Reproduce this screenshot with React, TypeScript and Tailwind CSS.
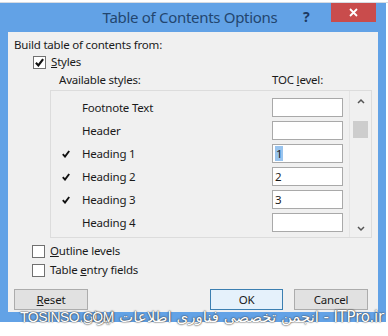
import React from 'react'

const rows = [
  { name: 'Footnote Text', level: '', checked: false },
  { name: 'Header', level: '', checked: false },
  { name: 'Heading 1', level: '1', checked: true },
  { name: 'Heading 2', level: '2', checked: true },
  { name: 'Heading 3', level: '3', checked: true },
  { name: 'Heading 4', level: '', checked: false },
]

function Tick({ size = 8 }: { size?: number }) {
  return (
    <svg width={size} height={size} viewBox="0 0 8 8">
      <path d="M0.8 4.2 L3 6.6 L7.2 1" fill="none" stroke="#111" strokeWidth="1.9" />
    </svg>
  )
}

function CheckBox({ checked }: { checked: boolean }) {
  return (
    <span className="w-[13px] h-[13px] border border-[#707070] bg-white flex items-center justify-center">
      {checked && <Tick size={9} />}
    </span>
  )
}

export default function App() {
  return (
    <div
      className="relative w-[388px] h-[336px] bg-white overflow-hidden text-[11.5px] tracking-[-0.2px] text-[#1a1a1a]"
      style={{ fontFamily: '"Noto Sans", "Open Sans", sans-serif' }}
    >
      {/* top strip */}
      <div className="h-[3px] border-b border-[#d6dbe2] bg-white"></div>

      {/* dialog frame */}
      <div className="w-[386px] bg-[#62a2e6]">
        {/* title bar */}
        <div className="relative h-[29px] flex items-center justify-center">
          <span className="text-[15px] tracking-[-0.3px] text-[#23466f] leading-none mt-[-1px] ml-[-6px]">
            Table of Contents Options
          </span>
          <span className="absolute left-[303px] top-[3px] text-[14px] font-bold text-[#1d3a63]">?</span>
          <div className="absolute left-[331px] top-0 w-[45px] h-[19px] bg-[#c94c4c] flex items-center justify-center">
            <svg width="9" height="9" viewBox="0 0 9 9">
              <path d="M1 1 L8 8 M8 1 L1 8" stroke="#fff" strokeWidth="1.8" />
            </svg>
          </div>
        </div>

        {/* body */}
        <div className="flex">
          <div className="ml-[8px] w-[370px] h-[280px] bg-[#f0f0f0] flex flex-col">
            <div className="mt-[5px] ml-[6px] leading-[16px]">Build table of contents from:</div>

            <div className="mt-[1px] ml-[25px] h-[16px] flex items-center gap-[5px]">
              <CheckBox checked />
              <span className="leading-[16px]">
                <u>S</u>tyles
              </span>
            </div>

            <div className="mt-[2px] ml-[51px] h-[16px] flex items-center leading-[16px]">
              <span className="w-[213px]">Available styles:</span>
              <span>
                TOC <u>l</u>evel:
              </span>
            </div>

            {/* list box */}
            <div className="mt-[2px] ml-[42px] w-[322px] h-[148px] border border-[#dcdcdc] flex">
              <div className="w-[299px] flex flex-col gap-[4px] pt-[7px] border-r border-[#e4e4e4]">
                {rows.map((r) => (
                  <div key={r.name} className="h-[19px] flex items-center pl-[11px]">
                    <span className="w-[20px] flex items-center">{r.checked && <Tick />}</span>
                    <span className="w-[190px] leading-[16px]">{r.name}</span>
                    <span className="w-[71px] h-[19px] bg-white border border-[#a9a9a9] flex items-center pl-[2px]">
                      {r.level === '1' ? (
                        <span className="bg-[#99c4ee] px-[1px] leading-[15px]">1</span>
                      ) : (
                        <span className="leading-[15px]">{r.level}</span>
                      )}
                    </span>
                  </div>
                ))}
              </div>
              {/* scrollbar */}
              <div className="w-[21px] flex flex-col items-center">
                <svg className="mt-[7px]" width="8" height="6" viewBox="0 0 8 6">
                  <path d="M1 5 L4 2 L7 5" fill="none" stroke="#555" strokeWidth="1.5" />
                </svg>
                <div className="mt-[17px] w-[15px] h-[17px] bg-[#cdcdcd]"></div>
                <div className="flex-1"></div>
                <svg className="mb-[5px]" width="8" height="6" viewBox="0 0 8 6">
                  <path d="M1 1 L4 4 L7 1" fill="none" stroke="#555" strokeWidth="1.5" />
                </svg>
              </div>
            </div>

            <div className="mt-[5px] ml-[24px] h-[16px] flex items-center gap-[5px]">
              <CheckBox checked={false} />
              <span className="leading-[16px]">
                <u>O</u>utline levels
              </span>
            </div>
            <div className="mt-[3px] ml-[24px] h-[16px] flex items-center gap-[5px]">
              <CheckBox checked={false} />
              <span className="leading-[16px]">
                Table <u>e</u>ntry fields
              </span>
            </div>

            {/* buttons */}
            <div className="mt-[11px] ml-[6px] flex">
              <button className="w-[74px] h-[21px] border border-[#acacac] bg-[#e1e1e1] leading-none">
                <u>R</u>eset
              </button>
              <button className="ml-[122px] w-[73px] h-[21px] border border-[#3c7fb1] bg-[#e5f1fb] leading-none">
                OK
              </button>
              <button className="ml-[11px] w-[74px] h-[21px] border border-[#acacac] bg-[#e1e1e1] leading-none">
                Cancel
              </button>
            </div>
          </div>
        </div>
        <div className="h-[10px]"></div>
      </div>

      {/* watermark */}
      <div
        dir="rtl"
        className="absolute left-0 top-[306px] w-[384px] text-right text-[15px] text-white whitespace-nowrap [text-shadow:0_0_2px_#3a3a3a,0_0_1px_#3a3a3a]"
        style={{ fontFamily: '"DejaVu Sans", sans-serif' }}
      >
        ITPro.ir - انجمن تخصصی فناوری اطلاعات ایران
      </div>
      <div
        className="absolute left-[20px] top-[307px] text-[14px] text-white tracking-[-0.5px] [text-shadow:0_0_2px_#3a3a3a,0_0_1px_#3a3a3a]"
        style={{ fontFamily: '"Liberation Sans", sans-serif' }}
      >
        TOSINSO.COM
      </div>
    </div>
  )
}
